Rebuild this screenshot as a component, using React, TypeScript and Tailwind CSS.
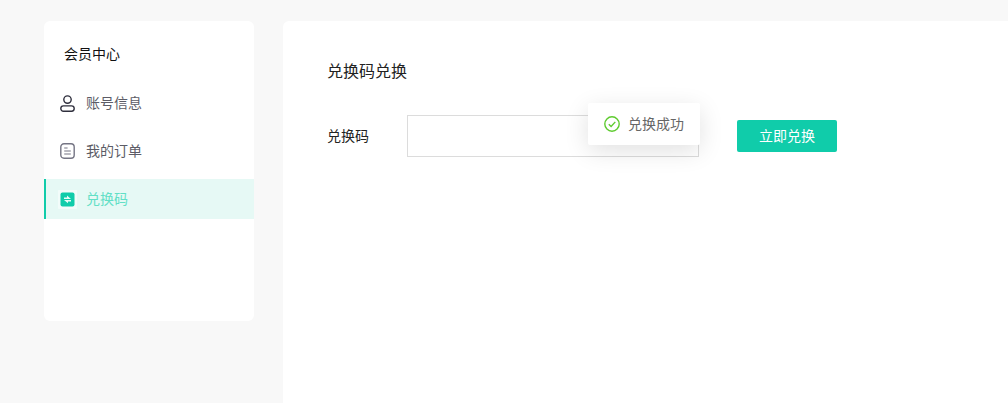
export default function App() {
  const font = { fontFamily: '"Noto Sans CJK SC", "Noto Sans", sans-serif' };
  return (
    <div style={font} className="relative flex h-[403px] w-[1008px] items-start gap-[29px] overflow-hidden bg-[#f8f8f8] pl-[44px] pt-[21px]">
      <aside className="flex h-[300px] w-[210px] shrink-0 flex-col rounded-[6px] bg-white pt-[22px]">
        <div className="mb-[20px] pl-[20px] text-[14px] leading-[20px] text-[#111111]">会员中心</div>
        <div className="flex flex-col gap-2">
          <div className="flex h-[40px] items-center pl-[16px] text-[14px] text-[#5c5c66]">
            <svg width="15" height="17" viewBox="0 0 15 17" fill="none" stroke="#2f2f3d" strokeWidth="1.4" className="mr-[11px]">
              <circle cx="7.5" cy="4.6" r="3.7" />
              <rect x="0.8" y="10.9" width="13.4" height="5.3" rx="2.65" />
            </svg>
            <span className="pb-[2px]">账号信息</span>
          </div>
          <div className="flex h-[40px] items-center pl-[16px] text-[14px] text-[#5c5c66]">
            <svg width="15" height="16" viewBox="0 0 15 16" fill="none" className="mr-[11px]">
              <rect x="0.8" y="0.8" width="13.4" height="14.4" rx="3.2" stroke="#757584" strokeWidth="1.4" />
              <path d="M4.2 5h3.4M4.2 8h6.6M4.2 11h6.6" stroke="#757584" strokeWidth="1.2" />
            </svg>
            <span className="pb-[2px]">我的订单</span>
          </div>
          <div className="flex h-[40px] items-center border-l-2 border-[#10ccaa] bg-[#e6f9f5] pl-[12px] text-[14px] text-[#62dfc6]">
            <svg width="19" height="19" viewBox="0 0 19 19" className="mr-[9px]">
              <rect x="0" y="0" width="19" height="19" rx="1" fill="#f2fcfa" />
              <rect x="2.5" y="2.5" width="14" height="14" rx="2" fill="#10ccaa" />
              <path d="M6 7.4h3V5.6l4 3.4H6z" fill="#e9fbf7" />
              <path d="M13 11.4h-3v1.9L6 10h7z" fill="#e9fbf7" />
            </svg>
            <span className="pb-[2px]">兑换码</span>
          </div>
        </div>
      </aside>
      <main className="h-[382px] flex-1 rounded-tl-[6px] bg-white pl-[44px] pt-[38px]">
        <h1 className="text-[16px] font-normal leading-[22px] text-[#222222]">兑换码兑换</h1>
        <div className="mt-[34px] flex items-center">
          <label className="w-[80px] pb-[2px] text-[14px] text-[#222222]">兑换码</label>
          <div className="h-[42px] w-[292px] border border-[#dcdcdc] bg-white" />
          <button className="ml-[38px] h-[32px] w-[100px] rounded-[2px] bg-[#10ccaa] pb-[2px] text-[14px] text-white">立即兑换</button>
        </div>
      </main>
      <div className="absolute left-[588px] top-[103px] flex h-[42px] w-[112px] items-center rounded-[2px] bg-white pl-[16px] text-[14px] text-[#666666] shadow-[0_6px_24px_rgba(0,0,0,0.12)]">
        <svg width="16" height="16" viewBox="0 0 16 16" fill="none" stroke="#5ecb2f" className="mr-[8px]">
          <circle cx="8" cy="8" r="7.2" strokeWidth="1.4" />
          <path d="M4.8 8.2l2.3 2.3 4.2-4.6" strokeWidth="1.4" />
        </svg>
        <span className="pb-[2px]">兑换成功</span>
      </div>
    </div>
  );
}
